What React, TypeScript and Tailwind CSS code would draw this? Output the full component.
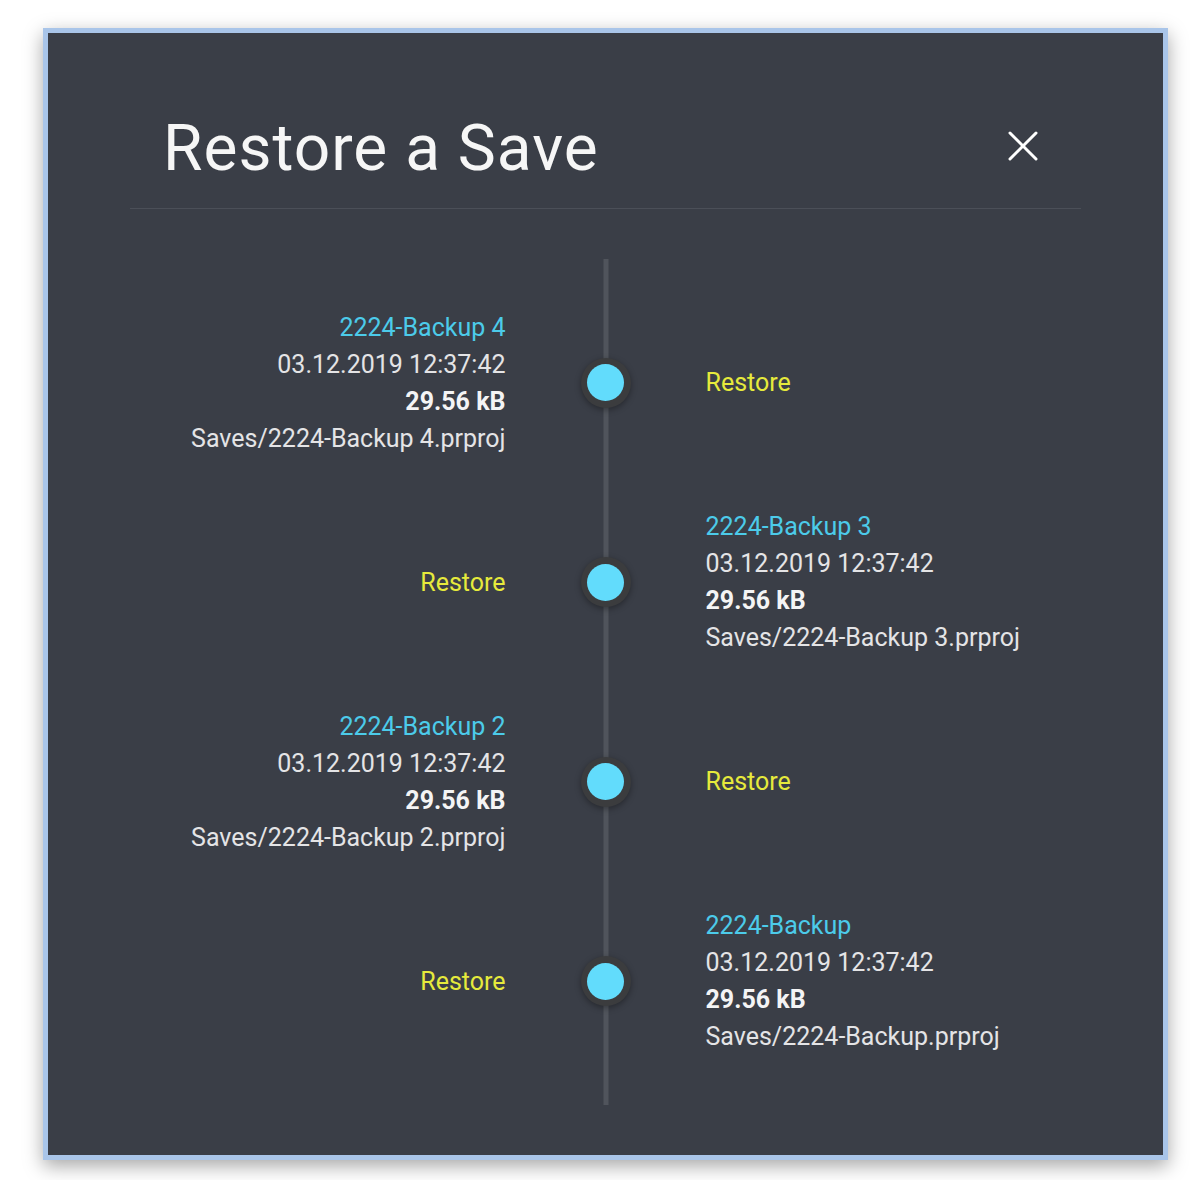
import React from "react";

type Save = {
  name: string;
  date: string;
  size: string;
  path: string;
};

const SAVES: Save[] = [
  { name: "2224-Backup 4", date: "03.12.2019 12:37:42", size: "29.56 kB", path: "Saves/2224-Backup 4.prproj" },
  { name: "2224-Backup 3", date: "03.12.2019 12:37:42", size: "29.56 kB", path: "Saves/2224-Backup 3.prproj" },
  { name: "2224-Backup 2", date: "03.12.2019 12:37:42", size: "29.56 kB", path: "Saves/2224-Backup 2.prproj" },
  { name: "2224-Backup", date: "03.12.2019 12:37:42", size: "29.56 kB", path: "Saves/2224-Backup.prproj" },
];

function SaveInfo({ save }: { save: Save }) {
  return (
    <div className="flex flex-col leading-[37px]">
      <span className="text-[#4ccbea]">{save.name}</span>
      <span className="text-[#e4e4e6]">{save.date}</span>
      <span className="font-bold text-[#f4f4f5]">{save.size}</span>
      <span className="text-[#e4e4e6]">{save.path}</span>
    </div>
  );
}

function RestoreLink() {
  return <button className="text-[#e6ea3c] leading-[37px] cursor-pointer">Restore</button>;
}

function TimelineRow({ save, flip }: { save: Save; flip: boolean }) {
  return (
    <div className="grid h-[199.5px] grid-cols-[1fr_200px_1fr] items-center">
      <div className="flex justify-end text-right">
        {flip ? <RestoreLink /> : <SaveInfo save={save} />}
      </div>
      <div className="flex justify-center">
        <div className="relative z-10 flex h-[50px] w-[50px] items-center justify-center rounded-full bg-[#3b3c3e] shadow-[0_2px_6px_rgba(0,0,0,0.35)]">
          <div className="h-[37px] w-[37px] rounded-full bg-[#62dcfc]" />
        </div>
      </div>
      <div className="flex justify-start text-left">
        {flip ? <SaveInfo save={save} /> : <RestoreLink />}
      </div>
    </div>
  );
}

export default function App() {
  return (
    <div className="h-[1180px] w-[1200px] bg-white pl-[43px] pt-[28px] font-['Roboto','Liberation_Sans',sans-serif]">
      <div className="h-[1132px] w-[1125px] border-[5px] border-[#a9c5e9] bg-[#3a3e47] shadow-[0_6px_18px_rgba(0,0,0,0.35)]">
        {/* header */}
        <div className="mx-[82px] flex items-start justify-between border-b border-[#4b4f58] pb-[27px] pl-[33px] pr-[42px] pt-[84px]">
          <h1 className="text-[64px] leading-[64px] font-normal tracking-[1px] text-[#f6f6f6]">Restore a Save</h1>
          <button className="mt-[13px] text-white" aria-label="Close">
            <svg width="32" height="32" viewBox="0 0 32 32" fill="none" stroke="currentColor" strokeWidth="3" strokeLinecap="round">
              <path d="M3 3 29 29" />
              <path d="M29 3 3 29" />
            </svg>
          </button>
        </div>

        {/* timeline */}
        <div className="relative mt-[50px] pb-[24px] pt-[24px] text-[25px]">
          <div className="absolute bottom-0 left-1/2 top-0 w-[5px] -translate-x-1/2 bg-[#50545c]" />
          {SAVES.map((save, i) => (
            <TimelineRow key={save.name} save={save} flip={i % 2 === 1} />
          ))}
        </div>
      </div>
    </div>
  );
}
